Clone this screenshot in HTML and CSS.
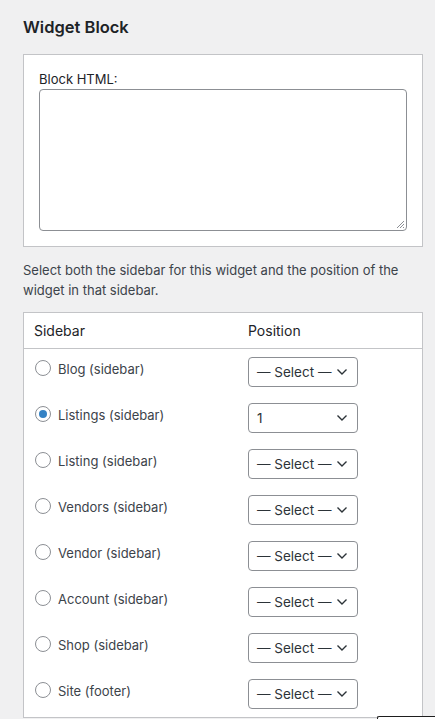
FILE: index.html
```html
<!DOCTYPE html>
<html>
<head>
<meta charset="utf-8">
<link rel="stylesheet" href="styles.css">
</head>
<body>
<div class="page">
  <h2 class="title">Widget Block</h2>
  <div class="box">
    <label class="label">Block HTML:</label>
    <div class="textarea">
      <svg class="grip" width="10" height="10" viewBox="0 0 10 10"><path d="M9 2 L2 9 M9 5 L5 9 M9 8 L8 9" stroke="#8c8f94" stroke-width="1" fill="none"/></svg>
    </div>
  </div>
  <p class="desc">Select both the sidebar for this widget and the position of the widget in that sidebar.</p>
  <table class="tbl">
    <thead>
      <tr><th class="c1">Sidebar</th><th class="c2">Position</th></tr>
    </thead>
    <tbody>
      <tr><td class="c1"><span class="radio"></span><span class="name">Blog (sidebar)</span></td><td class="c2"><div class="select"><span>— Select —</span><svg class="chev" width="12" height="8" viewBox="0 0 12 8"><path d="M1.5 1.5 L6 6 L10.5 1.5" stroke="#2c3338" stroke-width="1.4" fill="none"/></svg></div></td></tr>
      <tr><td class="c1"><span class="radio checked"></span><span class="name">Listings (sidebar)</span></td><td class="c2"><div class="select"><span>1</span><svg class="chev" width="12" height="8" viewBox="0 0 12 8"><path d="M1.5 1.5 L6 6 L10.5 1.5" stroke="#2c3338" stroke-width="1.4" fill="none"/></svg></div></td></tr>
      <tr><td class="c1"><span class="radio"></span><span class="name">Listing (sidebar)</span></td><td class="c2"><div class="select"><span>— Select —</span><svg class="chev" width="12" height="8" viewBox="0 0 12 8"><path d="M1.5 1.5 L6 6 L10.5 1.5" stroke="#2c3338" stroke-width="1.4" fill="none"/></svg></div></td></tr>
      <tr><td class="c1"><span class="radio"></span><span class="name">Vendors (sidebar)</span></td><td class="c2"><div class="select"><span>— Select —</span><svg class="chev" width="12" height="8" viewBox="0 0 12 8"><path d="M1.5 1.5 L6 6 L10.5 1.5" stroke="#2c3338" stroke-width="1.4" fill="none"/></svg></div></td></tr>
      <tr><td class="c1"><span class="radio"></span><span class="name">Vendor (sidebar)</span></td><td class="c2"><div class="select"><span>— Select —</span><svg class="chev" width="12" height="8" viewBox="0 0 12 8"><path d="M1.5 1.5 L6 6 L10.5 1.5" stroke="#2c3338" stroke-width="1.4" fill="none"/></svg></div></td></tr>
      <tr><td class="c1"><span class="radio"></span><span class="name">Account (sidebar)</span></td><td class="c2"><div class="select"><span>— Select —</span><svg class="chev" width="12" height="8" viewBox="0 0 12 8"><path d="M1.5 1.5 L6 6 L10.5 1.5" stroke="#2c3338" stroke-width="1.4" fill="none"/></svg></div></td></tr>
      <tr><td class="c1"><span class="radio"></span><span class="name">Shop (sidebar)</span></td><td class="c2"><div class="select"><span>— Select —</span><svg class="chev" width="12" height="8" viewBox="0 0 12 8"><path d="M1.5 1.5 L6 6 L10.5 1.5" stroke="#2c3338" stroke-width="1.4" fill="none"/></svg></div></td></tr>
      <tr><td class="c1"><span class="radio"></span><span class="name">Site (footer)</span></td><td class="c2"><div class="select"><span>— Select —</span><svg class="chev" width="12" height="8" viewBox="0 0 12 8"><path d="M1.5 1.5 L6 6 L10.5 1.5" stroke="#2c3338" stroke-width="1.4" fill="none"/></svg></div></td></tr>
    </tbody>
  </table>
</div>
<div class="popover"></div>
</body>
</html>
```
FILE: styles.css
```css
html, body {
  margin: 0;
  padding: 0;
  background: #f0f0f1;
  overflow: hidden;
}
body {
  font-family: Inter, "Noto Sans", sans-serif;
  font-size: 13px;
  color: #3c434a;
  height: 719px;
  position: relative;
}
.page {
  padding: 0 12px 0 23px;
}
.title {
  margin: 0;
  padding-top: 16px;
  font-size: 16.5px;
  line-height: 22px;
  font-weight: 600;
  color: #1d2327;
  height: 38px;
}
.box {
  background: #fff;
  border: 1px solid #c3c4c7;
  padding: 15px;
  display: flex;
  flex-direction: column;
}
.label {
  display: block;
  line-height: 19px;
  height: 19px;
  color: #1d2327;
}
.textarea {
  height: 140px;
  border: 1px solid #8c8f94;
  border-radius: 4px;
  position: relative;
}
.grip {
  position: absolute;
  right: 1px;
  bottom: 1px;
}
.desc {
  margin: 13px 0 12px;
  line-height: 20px;
  color: #3c434a;
}
.tbl {
  width: 400px;
  border-collapse: collapse;
  background: #fff;
  border: 1px solid #c3c4c7;
}
.tbl th {
  text-align: left;
  font-weight: 400;
  color: #1d2327;
  font-size: 14px;
  height: 35px;
  padding: 0 10px;
  border-bottom: 1px solid #c3c4c7;
}
.tbl td {
  height: 30px;
  padding: 8px 10px;
}
.tbl .c1 {
  width: 193px;
}
.tbl td.c1 {
  padding: 10px 10px 6px 11px;
  vertical-align: top;
}
.tbl td.c1 > * {
  vertical-align: middle;
}
.radio {
  display: inline-block;
  box-sizing: border-box;
  width: 16px;
  height: 16px;
  border: 1px solid #8c8f94;
  border-radius: 50%;
  margin-right: 7px;
  position: relative;
  top: -1px;
}
.radio.checked::after {
  content: "";
  position: absolute;
  left: 3px;
  top: 3px;
  width: 8px;
  height: 8px;
  border-radius: 50%;
  background: #3582c4;
}
.name {
  line-height: 20px;
}
.select {
  box-sizing: border-box;
  width: 110px;
  height: 30px;
  border: 1px solid #8c8f94;
  border-radius: 4px;
  display: flex;
  align-items: center;
  justify-content: space-between;
  padding: 0 9px 0 8px;
  font-size: 13.5px;
  color: #2c3338;
  background: #fff;
}
.popover {
  position: absolute;
  left: 377px;
  top: 716px;
  width: 57px;
  height: 20px;
  background: #fff;
  border: 1px solid #1e1e1e;
  border-right: 0;
  border-radius: 2px 0 0 0;
}
```
